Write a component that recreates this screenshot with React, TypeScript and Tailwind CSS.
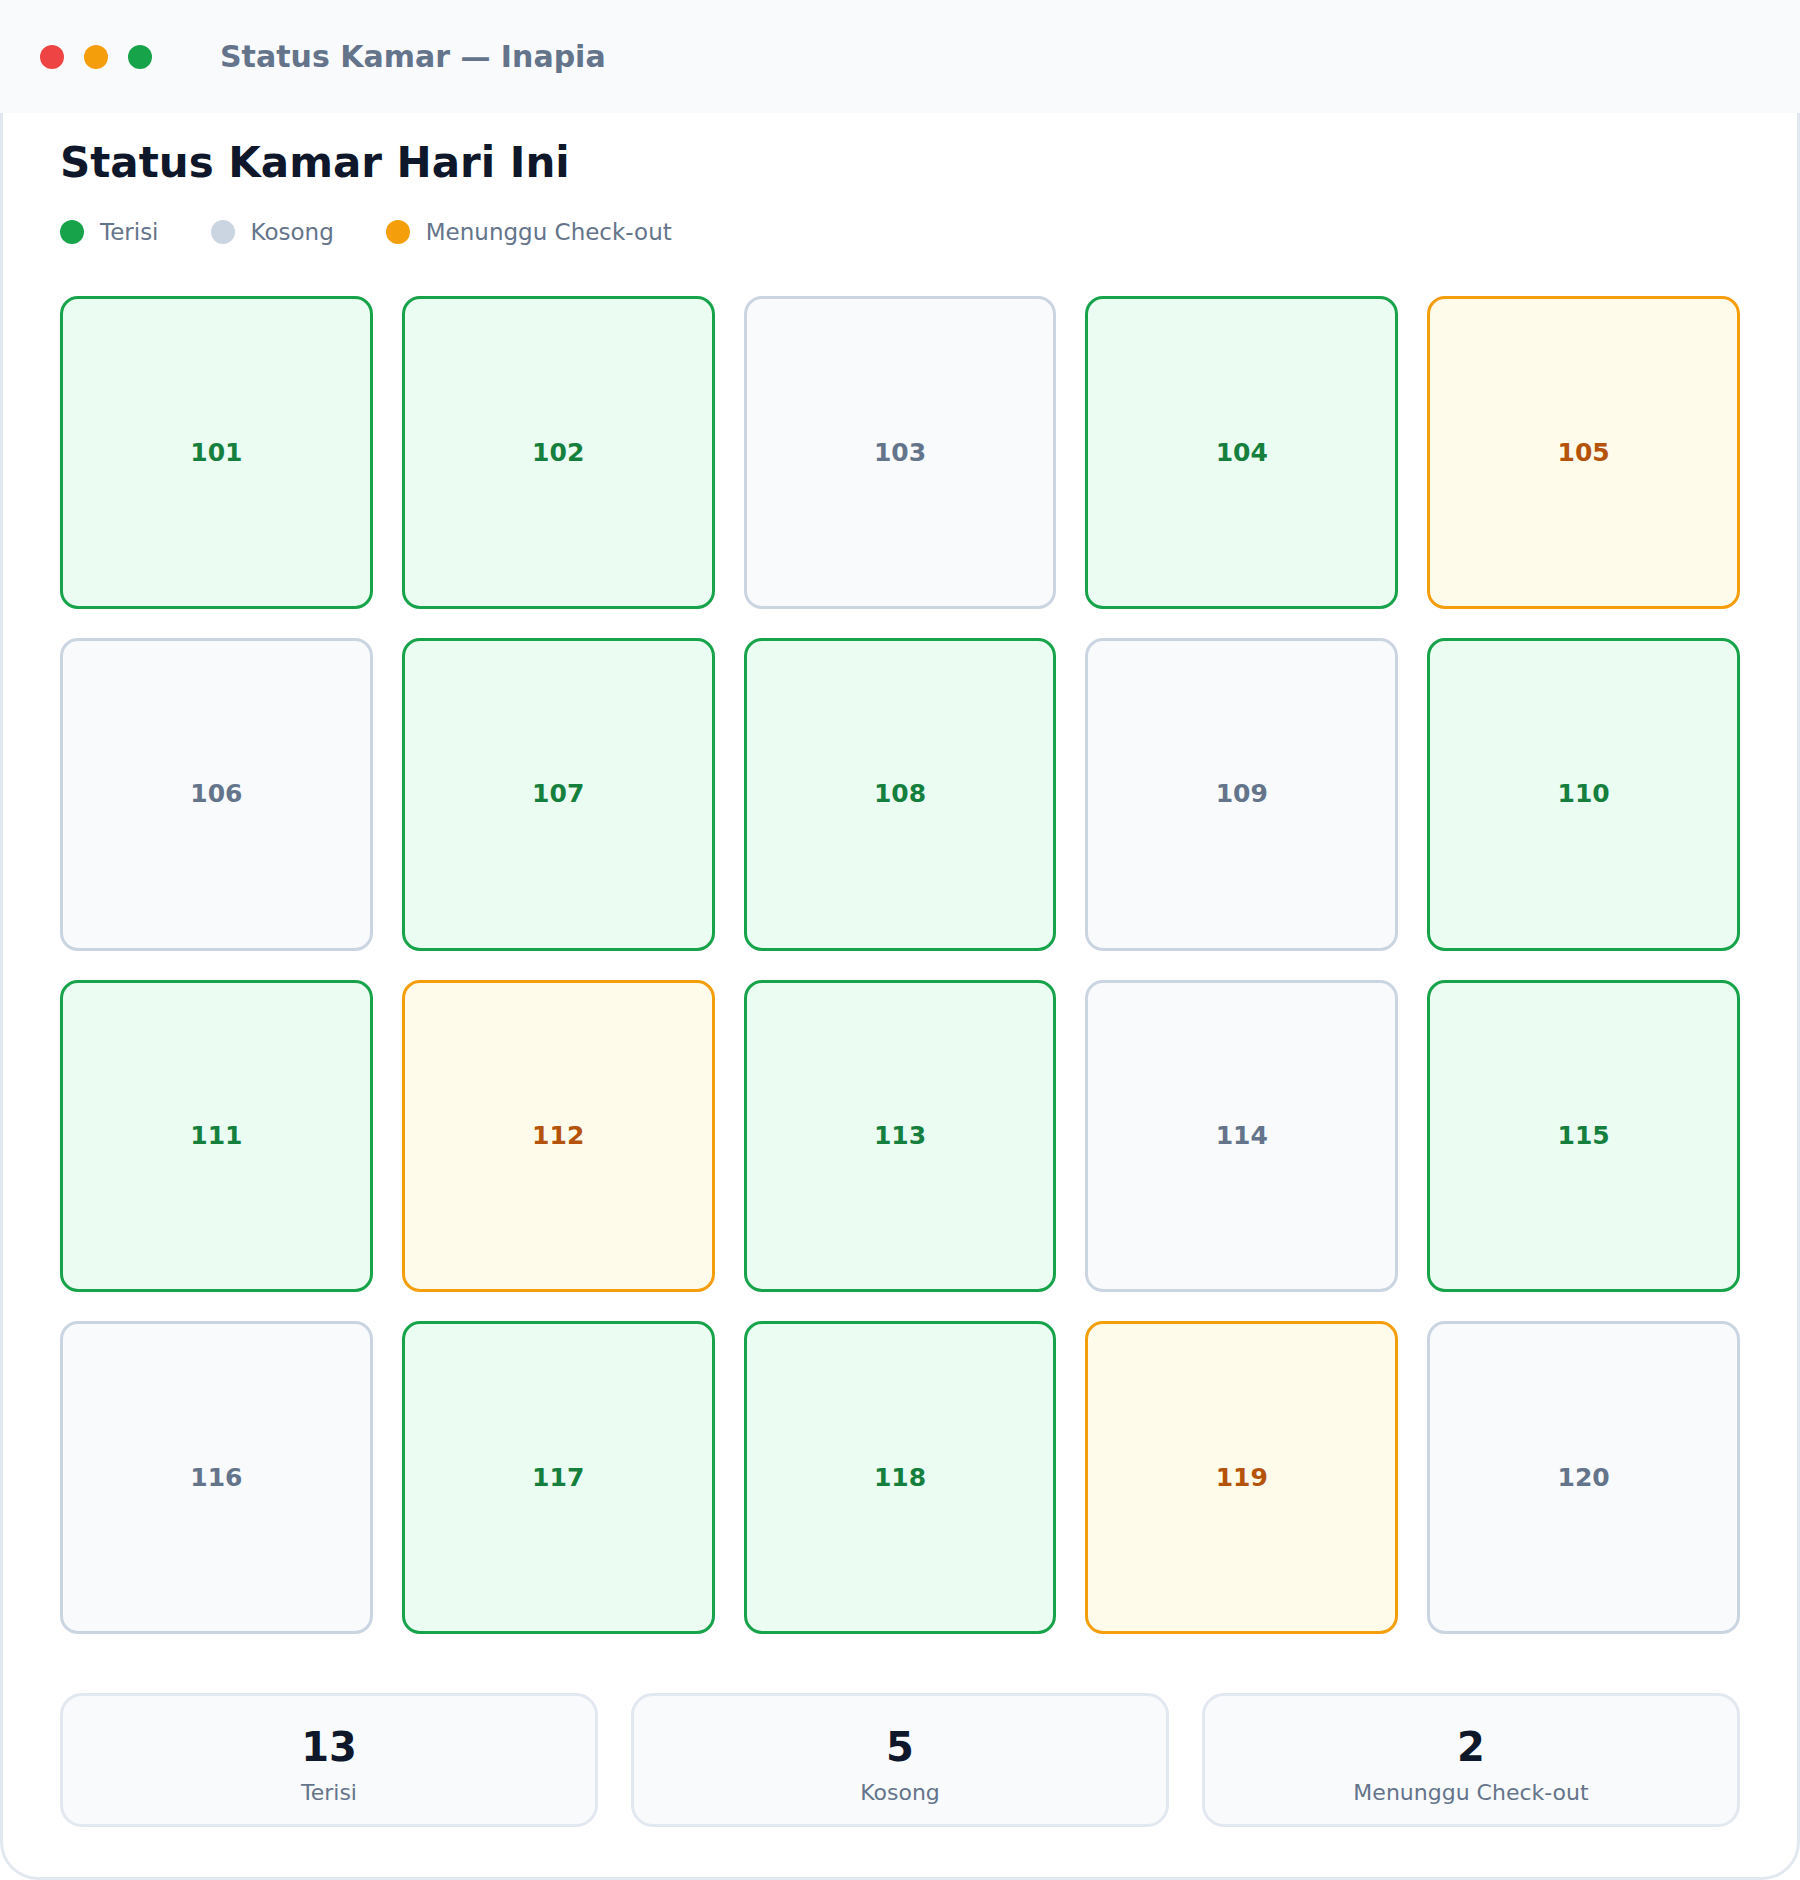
import React from 'react';

type Status = 'terisi' | 'kosong' | 'checkout';

const rooms: { no: number; status: Status }[] = [
  { no: 101, status: 'terisi' },
  { no: 102, status: 'terisi' },
  { no: 103, status: 'kosong' },
  { no: 104, status: 'terisi' },
  { no: 105, status: 'checkout' },
  { no: 106, status: 'kosong' },
  { no: 107, status: 'terisi' },
  { no: 108, status: 'terisi' },
  { no: 109, status: 'kosong' },
  { no: 110, status: 'terisi' },
  { no: 111, status: 'terisi' },
  { no: 112, status: 'checkout' },
  { no: 113, status: 'terisi' },
  { no: 114, status: 'kosong' },
  { no: 115, status: 'terisi' },
  { no: 116, status: 'kosong' },
  { no: 117, status: 'terisi' },
  { no: 118, status: 'terisi' },
  { no: 119, status: 'checkout' },
  { no: 120, status: 'kosong' },
];

const cellStyles: Record<Status, string> = {
  terisi: 'border-[#16a34a] bg-[#ebfcf2] text-[#15803d]',
  kosong: 'border-[#cbd5e1] bg-[#f8fafc] text-[#64748b]',
  checkout: 'border-[#f59e0b] bg-[#fefbea] text-[#b45309]',
};

const legend = [
  { label: 'Terisi', dot: 'bg-[#16a34a]' },
  { label: 'Kosong', dot: 'bg-[#cbd5e1]' },
  { label: 'Menunggu Check-out', dot: 'bg-[#f59e0b]' },
];

// totals as shown on the board
const summary = [
  { value: 13, label: 'Terisi' },
  { value: 5, label: 'Kosong' },
  { value: 2, label: 'Menunggu Check-out' },
];

const RoomCell: React.FC<{ no: number; status: Status }> = ({ no, status }) => (
  <div
    className={`aspect-square rounded-[18px] border-[3px] flex items-center justify-center text-[25px] font-bold ${cellStyles[status]}`}
  >
    {no}
  </div>
);

const SummaryCard: React.FC<{ value: number; label: string }> = ({ value, label }) => (
  <div className="h-[134px] rounded-[22px] border-[3px] border-[#e2e8f0] bg-[#f8fafc] pt-[31px] flex flex-col items-center">
    <div className="text-[40px] leading-none font-bold text-[#0f172a]">{value}</div>
    <div className="mt-[15px] text-[22px] leading-none text-[#64748b]">{label}</div>
  </div>
);

export default function App() {
  return (
    <div className="w-[1800px] h-[1880px] bg-white font-['DejaVu_Sans','Noto_Sans',sans-serif]">
      {/* window title bar */}
      <div className="h-[113px] bg-[#f8fafc] flex items-center pl-10">
        <div className="flex gap-5">
          <span className="w-6 h-6 rounded-full bg-[#ef4444]" />
          <span className="w-6 h-6 rounded-full bg-[#f59e0b]" />
          <span className="w-6 h-6 rounded-full bg-[#16a34a]" />
        </div>
        <div className="ml-[68px] text-[30px] font-bold text-[#64748b]">Status Kamar — Inapia</div>
      </div>

      <div className="h-[1767px] border-x-[3px] border-b-[3px] border-[#e2e8f0] rounded-b-[38px] px-[57px] pt-[25px]">
        <h1 className="text-[42px] leading-[50px] font-bold text-[#0f172a]">Status Kamar Hari Ini</h1>

        <div className="mt-[31px] flex items-center gap-[52px] h-[26px]">
          {legend.map((l) => (
            <div key={l.label} className="flex items-center gap-4">
              <span className={`w-6 h-6 rounded-full ${l.dot}`} />
              <span className="text-[23px] leading-[26px] text-[#64748b]">{l.label}</span>
            </div>
          ))}
        </div>

        <div className="mt-[51px] grid grid-cols-5 gap-[29px]">
          {rooms.map((r) => (
            <RoomCell key={r.no} no={r.no} status={r.status} />
          ))}
        </div>

        <div className="mt-[59px] grid grid-cols-3 gap-[33px]">
          {summary.map((s) => (
            <SummaryCard key={s.label} value={s.value} label={s.label} />
          ))}
        </div>
      </div>
    </div>
  );
}
